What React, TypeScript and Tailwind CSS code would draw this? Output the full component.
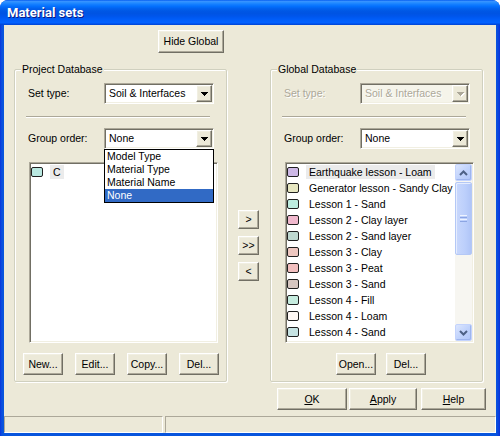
import React from "react";

const RAISED =
  "border border-t-white border-l-white border-b-[#716F64] border-r-[#716F64] shadow-[inset_-1px_-1px_#ACA899,inset_1px_1px_#F1EFE2] bg-[#ECE9D8]";
const SUNKEN =
  "border border-t-[#ACA899] border-l-[#ACA899] border-b-white border-r-white shadow-[inset_1px_1px_#716F64,inset_-1px_-1px_#F1EFE2]";

function Btn({ className, children }: { className: string; children: React.ReactNode }) {
  return (
    <div className={`${RAISED} ${className} flex items-center justify-center text-black leading-none`}>
      {children}
    </div>
  );
}

function Arrow({ disabled }: { disabled?: boolean }) {
  const c = disabled ? "#ACA899" : "#000000";
  return (
    <svg width="8" height="5" viewBox="0 0 8 5">
      {disabled && (
        <g fill="#FFFFFF">
          <rect x="1" y="1" width="7" height="1" />
          <rect x="2" y="2" width="5" height="1" />
          <rect x="3" y="3" width="3" height="1" />
          <rect x="4" y="4" width="1" height="1" />
        </g>
      )}
      <g fill={c}>
        <rect x="0" y="0" width="7" height="1" />
        <rect x="1" y="1" width="5" height="1" />
        <rect x="2" y="2" width="3" height="1" />
        <rect x="3" y="3" width="1" height="1" />
      </g>
    </svg>
  );
}

function Combo({ value, disabled, dropdown }: { value: string; disabled?: boolean; dropdown?: boolean }) {
  return (
    <div className="relative">
      <div
        className={`${SUNKEN} w-[110px] h-[21px] flex items-center p-[1px] ${
          disabled ? "bg-[#F5F4EA]" : "bg-white"
        }`}
      >
        <div
          className={`flex-1 pl-[3px] ${
            disabled ? "text-[#ACA899] [text-shadow:1px_1px_#FFFFFF]" : "text-black"
          }`}
        >
          {value}
        </div>
        <div className={`${RAISED} w-[16px] h-[17px] flex items-center justify-center pl-[1px] pt-[1px]`}>
          <Arrow disabled={disabled} />
        </div>
      </div>
      {dropdown && (
        <div className="absolute top-full left-0 z-10 w-[110px] border border-black bg-white">
          {["Model Type", "Material Type", "Material Name", "None"].map((t) => (
            <div
              key={t}
              className={`h-[13px] leading-[13px] pl-[2px] ${
                t === "None" ? "bg-[#316AC5] text-white" : "text-black"
              }`}
            >
              {t}
            </div>
          ))}
        </div>
      )}
    </div>
  );
}

type Item = { name: string; color: string; selected?: boolean };

function Row({ item }: { item: Item }) {
  return (
    <div className="h-[16px] flex items-center shrink-0">
      <div
        className="w-[12px] h-[10px] border border-[#202020] rounded-[2px] shrink-0"
        style={{ backgroundColor: item.color }}
      />
      <div
        className={`ml-[7px] px-[3px] h-[14px] leading-[14px] whitespace-nowrap text-black ${
          item.selected ? "bg-[#EBEBEB]" : ""
        }`}
      >
        {item.name}
      </div>
    </div>
  );
}

function ScrollBtn({ up }: { up?: boolean }) {
  return (
    <div className="h-[17px] w-[17px] rounded-[2px] border border-[#C3D3FD] bg-[linear-gradient(135deg,#DCE6FE_0%,#C1D3FC_50%,#B0C6F8_100%)] flex items-center justify-center shadow-[inset_-1px_-1px_#9EB5EE]">
      <svg width="9" height="6" viewBox="0 0 9 6">
        <path
          d={up ? "M1 5 L4.5 1.5 L8 5" : "M1 1 L4.5 4.5 L8 1"}
          stroke="#4D6185"
          strokeWidth="2"
          fill="none"
        />
      </svg>
    </div>
  );
}

function ListBox({ items, scroll }: { items: Item[]; scroll?: boolean }) {
  return (
    <div className={`${SUNKEN} bg-white w-[189px] h-[181px] p-[1px] flex`}>
      <div className="flex-1 flex flex-col overflow-hidden">
        {items.map((it) => (
          <Row key={it.name} item={it} />
        ))}
      </div>
      {scroll && (
        <div className="w-[17px] flex flex-col bg-[#F7F6F1]">
          <ScrollBtn up />
          <div className="h-[73px] mt-[1px] rounded-[2px] border border-[#B4C8F6] bg-[linear-gradient(90deg,#C9D8FC_0%,#BCCFFB_60%,#B0C5F7_100%)] flex flex-col items-center justify-center gap-[1px] shadow-[inset_1px_1px_#E6EDFE]">
            <div className="w-[7px] h-[1px] bg-[#EEF3FF]" />
            <div className="w-[7px] h-[1px] bg-[#8CA5E3]" />
            <div className="w-[7px] h-[1px] bg-[#EEF3FF]" />
            <div className="w-[7px] h-[1px] bg-[#8CA5E3]" />
          </div>
          <div className="flex-1" />
          <ScrollBtn />
        </div>
      )}
    </div>
  );
}

function GroupBox({
  title,
  disabledSet,
  dropdown,
  items,
  scroll,
  buttons,
}: {
  title: string;
  disabledSet?: boolean;
  dropdown?: boolean;
  items: Item[];
  scroll?: boolean;
  buttons: React.ReactNode;
}) {
  const dis = "text-[#ACA899] [text-shadow:1px_1px_#FFFFFF]";
  return (
    <div className="relative w-[213px] h-[313px] border border-[#D0D0BF] rounded-[2px] shadow-[1px_1px_#FFFFFF,inset_1px_1px_#FFFFFF] flex flex-col">
      <div className="absolute -top-[7px] left-[6px] px-[1px] bg-[#ECE9D8] leading-[13px] text-black">
        {title}
      </div>
      <div className="mt-[13px] ml-[13px] h-[21px] flex items-center">
        <div className={`w-[76px] ${disabledSet ? dis : "text-black"}`}>Set type:</div>
        <Combo value="Soil & Interfaces" disabled={disabledSet} />
      </div>
      <div className="mt-[12px] ml-[11px] w-[184px] h-[2px] border-t border-t-[#ACA899] border-b border-b-white" />
      <div className="mt-[10px] ml-[13px] h-[21px] flex items-center relative z-10">
        <div className="w-[76px] text-black">Group order:</div>
        <Combo value="None" dropdown={dropdown} />
      </div>
      <div className="mt-[13px] ml-[14px]">
        <ListBox items={items} scroll={scroll} />
      </div>
      <div className="mt-[10px] flex">{buttons}</div>
    </div>
  );
}

const globalItems: Item[] = [
  { name: "Earthquake lesson - Loam", color: "#CDB8E6", selected: true },
  { name: "Generator lesson - Sandy Clay", color: "#E6E6C0" },
  { name: "Lesson 1 - Sand", color: "#BDEDE0" },
  { name: "Lesson 2 - Clay layer", color: "#F0B8CD" },
  { name: "Lesson 2 - Sand layer", color: "#BED8D0" },
  { name: "Lesson 3 - Clay", color: "#EEC7C0" },
  { name: "Lesson 3 - Peat", color: "#F2BFBF" },
  { name: "Lesson 3 - Sand", color: "#D6C6C0" },
  { name: "Lesson 4 - Fill", color: "#C6ECDF" },
  { name: "Lesson 4 - Loam", color: "#FFF9F5" },
  { name: "Lesson 4 - Sand", color: "#C6E3E3" },
];

const projectItems: Item[] = [{ name: "C", color: "#B9E8E0", selected: true }];

export default function App() {
  return (
    <div className="w-[500px] h-[436px] bg-white font-['Liberation_Sans',Arial,sans-serif] text-[10.5px]">
      <div className="w-[500px] h-[436px] rounded-t-[8px] overflow-hidden bg-[linear-gradient(90deg,#0831D9_0px,#0A47E0_1px,#0855DD_3px,#0855DD_496px,#0A47E0_498px,#0831D9_500px)] flex flex-col">
        <div className="h-[25px] shrink-0 bg-[linear-gradient(180deg,#0058EE_0%,#3A93FF_5%,#288EFF_10%,#127DFF_18%,#036FFC_26%,#0262EE_34%,#0057E5_44%,#0054E3_54%,#0055EB_64%,#005BF5_74%,#0260FC_84%,#0262FF_90%,#0050E8_96%,#0043CF_100%)] flex items-center pl-[7px] pt-[1px]">
          <span className="font-['Roboto',sans-serif] font-bold text-[13px] text-white [text-shadow:1px_1px_#0A1883]">
            Material sets
          </span>
        </div>
        <div className="flex-1 mx-[4px] mb-[3px] bg-[#ECE9D8] flex flex-col">
          <div className="pt-[5px] pl-[154px]">
            <Btn className="w-[66px] h-[23px]">Hide Global</Btn>
          </div>
          <div className="mt-[16px] pl-[10px] flex">
            <GroupBox
              title="Project Database"
              dropdown
              items={projectItems}
              buttons={
                <div className="ml-[8px] flex gap-[12px]">
                  <Btn className="w-[40px] h-[22px]">New...</Btn>
                  <Btn className="w-[40px] h-[22px]">Edit...</Btn>
                  <Btn className="w-[40px] h-[22px]">Copy...</Btn>
                  <Btn className="w-[40px] h-[22px]">Del...</Btn>
                </div>
              }
            />
            <div className="w-[43px] flex flex-col pl-[11px] pt-[141px] gap-[7px]">
              <Btn className="w-[21px] h-[19px]">&gt;</Btn>
              <Btn className="w-[21px] h-[19px]">&gt;&gt;</Btn>
              <Btn className="w-[21px] h-[19px]">&lt;</Btn>
            </div>
            <GroupBox
              title="Global Database"
              disabledSet
              items={globalItems}
              scroll
              buttons={
                <div className="ml-[65px] flex gap-[10px]">
                  <Btn className="w-[40px] h-[22px]">Open...</Btn>
                  <Btn className="w-[40px] h-[22px]">Del...</Btn>
                </div>
              }
            />
          </div>
          <div className="mt-[6px] pl-[273px] flex">
            <Btn className="w-[70px] h-[22px]">
              <span className="underline">O</span>K
            </Btn>
            <Btn className="ml-[2px] w-[68px] h-[22px]">
              <span className="underline">A</span>pply
            </Btn>
            <Btn className="ml-[4px] w-[65px] h-[22px]">
              <span className="underline">H</span>elp
            </Btn>
          </div>
          <div className="flex-1" />
          <div className="h-[17px] flex gap-[2px]">
            <div className="w-[159px] h-full border border-t-[#ACA899] border-l-[#ACA899] border-b-white border-r-white" />
            <div className="flex-1 h-full border border-t-[#ACA899] border-l-[#ACA899] border-b-white border-r-white" />
          </div>
        </div>
      </div>
    </div>
  );
}
